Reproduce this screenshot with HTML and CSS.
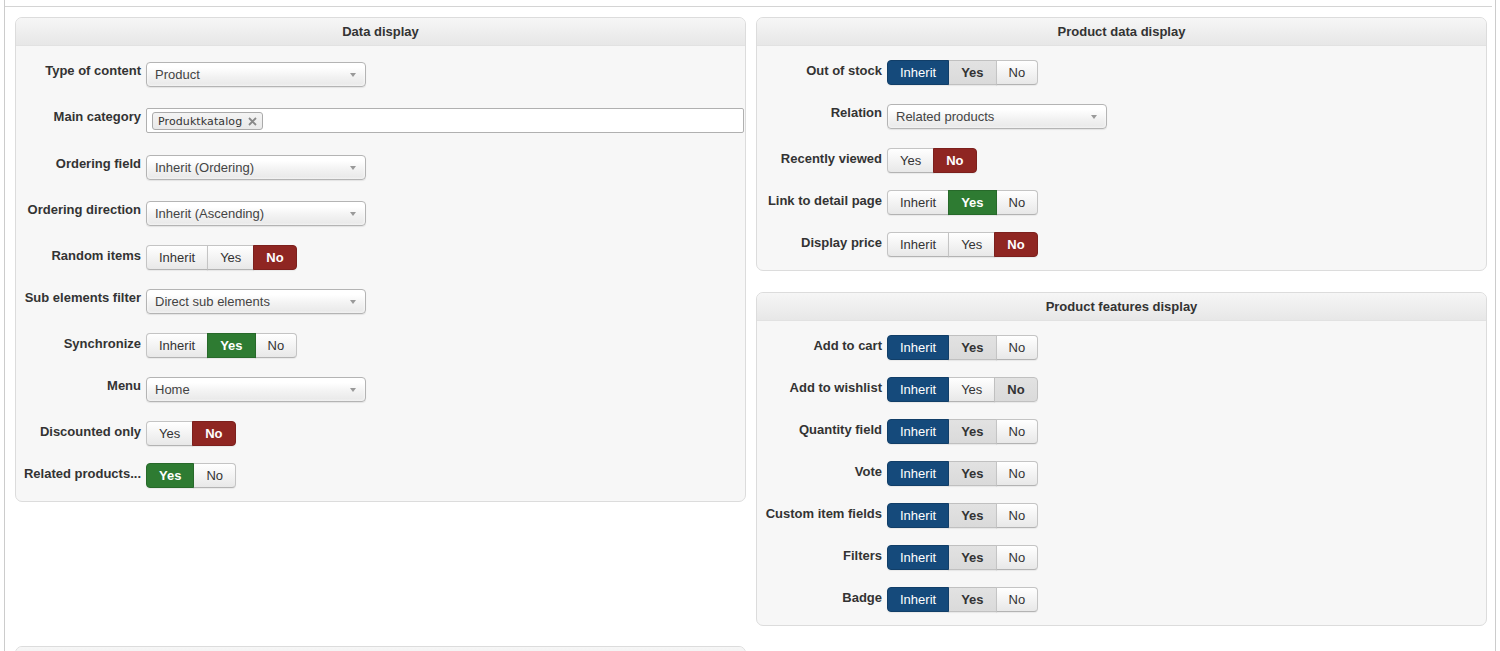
FILE: index.html
```html
<!DOCTYPE html>
<html lang="en">
<head>
<meta charset="UTF-8" />
<title>Module options – Data display</title>
<meta name="viewport" content="width=device-width, initial-scale=1" />
<link rel="stylesheet" href="styles.css">
</head>
<body>
  <div class="page">
    <div class="tabline"></div>

    <div class="content">
      <div class="grid">

        <!-- DATA DISPLAY -->
        <section class="panel">
          <div class="panel-head">Data display</div>
          <div class="panel-body">
            <div class="row">
              <label class="lbl">Type of content</label>
              <div class="select">Product<span class="caret"></span></div>
            </div>
            <div class="row">
              <label class="lbl">Main category</label>
              <div class="tags">
                <span class="tag">Produktkatalog
                  <svg class="tag-x" width="9" height="9" viewBox="0 0 9 9"><path d="M1 1 L8 8 M8 1 L1 8" /></svg>
                </span>
              </div>
            </div>
            <div class="row">
              <label class="lbl">Ordering field</label>
              <div class="select">Inherit (Ordering)<span class="caret"></span></div>
            </div>
            <div class="row">
              <label class="lbl">Ordering direction</label>
              <div class="select">Inherit (Ascending)<span class="caret"></span></div>
            </div>
            <div class="row">
              <label class="lbl">Random items</label>
              <div class="btns"><span class="btn">Inherit</span><span class="btn">Yes</span><span class="btn on-no">No</span></div>
            </div>
            <div class="row">
              <label class="lbl">Sub elements filter</label>
              <div class="select">Direct sub elements<span class="caret"></span></div>
            </div>
            <div class="row">
              <label class="lbl">Synchronize</label>
              <div class="btns"><span class="btn">Inherit</span><span class="btn on-yes">Yes</span><span class="btn">No</span></div>
            </div>
            <div class="row">
              <label class="lbl">Menu</label>
              <div class="select">Home<span class="caret"></span></div>
            </div>
            <div class="row">
              <label class="lbl">Discounted only</label>
              <div class="btns"><span class="btn">Yes</span><span class="btn on-no">No</span></div>
            </div>
            <div class="row">
              <label class="lbl">Related products...</label>
              <div class="btns"><span class="btn on-yes">Yes</span><span class="btn">No</span></div>
            </div>
          </div>
        </section>

        <div class="col">
          <!-- PRODUCT DATA -->
          <section class="panel">
            <div class="panel-head">Product data display</div>
            <div class="panel-body">
              <div class="row">
                <label class="lbl">Out of stock</label>
                <div class="btns"><span class="btn on-inherit">Inherit</span><span class="btn inherited">Yes</span><span class="btn">No</span></div>
              </div>
              <div class="row">
                <label class="lbl">Relation</label>
                <div class="select">Related products<span class="caret"></span></div>
              </div>
              <div class="row">
                <label class="lbl">Recently viewed</label>
                <div class="btns"><span class="btn">Yes</span><span class="btn on-no">No</span></div>
              </div>
              <div class="row">
                <label class="lbl">Link to detail page</label>
                <div class="btns"><span class="btn">Inherit</span><span class="btn on-yes">Yes</span><span class="btn">No</span></div>
              </div>
              <div class="row">
                <label class="lbl">Display price</label>
                <div class="btns"><span class="btn">Inherit</span><span class="btn">Yes</span><span class="btn on-no">No</span></div>
              </div>
            </div>
          </section>

          <!-- PRODUCT FEATURES -->
          <section class="panel">
            <div class="panel-head">Product features display</div>
            <div class="panel-body">
              <div class="row">
                <label class="lbl">Add to cart</label>
                <div class="btns"><span class="btn on-inherit">Inherit</span><span class="btn inherited">Yes</span><span class="btn">No</span></div>
              </div>
              <div class="row">
                <label class="lbl">Add to wishlist</label>
                <div class="btns"><span class="btn on-inherit">Inherit</span><span class="btn">Yes</span><span class="btn inherited">No</span></div>
              </div>
              <div class="row">
                <label class="lbl">Quantity field</label>
                <div class="btns"><span class="btn on-inherit">Inherit</span><span class="btn inherited">Yes</span><span class="btn">No</span></div>
              </div>
              <div class="row">
                <label class="lbl">Vote</label>
                <div class="btns"><span class="btn on-inherit">Inherit</span><span class="btn inherited">Yes</span><span class="btn">No</span></div>
              </div>
              <div class="row">
                <label class="lbl">Custom item fields</label>
                <div class="btns"><span class="btn on-inherit">Inherit</span><span class="btn inherited">Yes</span><span class="btn">No</span></div>
              </div>
              <div class="row">
                <label class="lbl">Filters</label>
                <div class="btns"><span class="btn on-inherit">Inherit</span><span class="btn inherited">Yes</span><span class="btn">No</span></div>
              </div>
              <div class="row">
                <label class="lbl">Badge</label>
                <div class="btns"><span class="btn on-inherit">Inherit</span><span class="btn inherited">Yes</span><span class="btn">No</span></div>
              </div>
            </div>
          </section>
        </div>

        <!-- next panel, below the fold -->
        <section class="panel">
          <div class="panel-head"></div>
          <div class="panel-body"></div>
        </section>

      </div>
    </div>
  </div>
</body>
</html>
```

FILE: styles.css
```css
:root {
  --text: #333;
  --line: #ccc;
  --panel-line: #dcdcdc;
  --blue: #154a7b;
  --green: #2e7b32;
  --red: #8f2622;
  --font: 'Liberation Sans', Arial, sans-serif;
}

* {
  box-sizing: border-box;
}

html,
body {
  margin: 0;
  padding: 0;
  background: #fff;
  color: var(--text);
  font-family: var(--font);
  font-size: 13px;
}

/* ------------ FRAME ------------- */
.page {
  margin: 0 4px;
  min-height: 100vh;
  border-left: 1px solid var(--line);
  border-right: 1px solid var(--line);
}
.tabline {
  height: 7px;
  margin-right: 3px;
  border-bottom: 1px solid #d4d4d4;
}
.content {
  padding: 10px 8px 0 10px;
}
.grid {
  display: grid;
  grid-template-columns: 1fr 1fr;
  column-gap: 10px;
  row-gap: 20px;
  align-items: start;
}
.col {
  display: flex;
  flex-direction: column;
  gap: 21px;
}

/* ------------ PANELS ------------- */
.panel {
  background: #f7f7f7;
  border: 1px solid var(--panel-line);
  border-radius: 7px;
  overflow: hidden;
}
.panel-head {
  height: 28px;
  line-height: 27px;
  text-align: center;
  font-weight: bold;
  background: linear-gradient(#f6f6f6, #e7e7e7);
  border-bottom: 1px solid #e2e2e2;
}
.panel-body {
  display: flex;
  flex-direction: column;
  gap: 17px;
  padding: 14px 0 13px;
}

.row {
  display: flex;
  align-items: flex-start;
  gap: 5px;
}
.lbl {
  flex: 0 0 125px;
  padding-top: 2px;
  line-height: 18px;
  text-align: right;
  font-weight: bold;
  white-space: nowrap;
}

/* ------------ CONTROLS ------------- */
.select {
  position: relative;
  width: 220px;
  height: 25px;
  margin: 2px 0;
  padding-left: 8px;
  line-height: 23px;
  color: #444;
  border: 1px solid #b4b4b4;
  border-radius: 4px;
  background: linear-gradient(#fff 20%, #f2f2f2 60%, #e8e8e8);
  box-shadow: 0 0 3px #fff inset, 0 1px 1px rgba(0, 0, 0, 0.08);
}
.caret {
  position: absolute;
  right: 9px;
  top: 10px;
  border-left: 3.5px solid transparent;
  border-right: 3.5px solid transparent;
  border-top: 4px solid #999;
}

.tags {
  flex: 1;
  height: 25px;
  margin: 2px 1px 3px 0;
  padding: 3px 5px;
  background: #fff;
  border: 1px solid #b0b0b0;
  border-radius: 2px;
}
.tag {
  display: inline-flex;
  align-items: center;
  gap: 6px;
  height: 18px;
  padding: 0 5px 0 5px;
  font-family: 'DejaVu Sans', Verdana, sans-serif;
  font-size: 11px;
  letter-spacing: 0.1px;
  color: #333;
  border: 1px solid #aaa;
  border-radius: 3px;
  background: linear-gradient(#f4f4f4, #e9e9e9);
}
.tag-x {
  stroke: #888;
  stroke-width: 1.8;
}

.btns {
  display: flex;
  height: 25px;
}
.btn {
  height: 25px;
  padding: 0 12px;
  line-height: 23px;
  color: var(--text);
  border: 1px solid #c4c4c4;
  border-bottom-color: #b3b3b3;
  margin-left: -1px;
  background: linear-gradient(#fff, #e8e8e8);
  box-shadow: 0 1px 1px rgba(0, 0, 0, 0.06);
}
.btn:first-child {
  margin-left: 0;
  border-radius: 4px 0 0 4px;
}
.btn:last-child {
  border-radius: 0 4px 4px 0;
}
.btn.inherited {
  font-weight: bold;
  background: linear-gradient(#e2e2e2, #dadada);
  border-color: #c0c0c0;
}
.btn.on-inherit {
  position: relative;
  color: #fff;
  background: var(--blue);
  border-color: #113e68;
}
.btn.on-yes {
  position: relative;
  color: #fff;
  font-weight: bold;
  background: var(--green);
  border-color: #27692a;
}
.btn.on-no {
  position: relative;
  color: #fff;
  font-weight: bold;
  background: var(--red);
  border-color: #7c201d;
}
```
